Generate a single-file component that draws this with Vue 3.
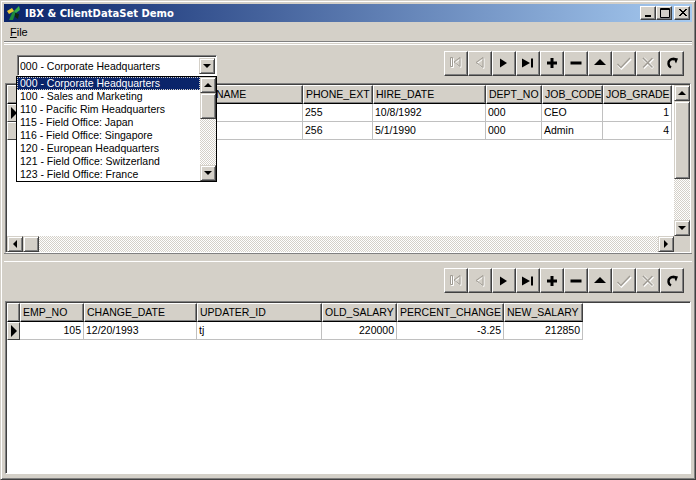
<template>
  <div class="window">
    <div class="titlebar">
      <svg class="app-icon" width="16" height="16" viewBox="0 0 16 16">
        <path d="M3 15 L7 6 L10 6 L7 15 Z" fill="#1d8a3a" />
        <path d="M1 6 L6 3 L8 6 L3 9 Z" fill="#e8c838" />
        <path d="M8 6 L13 1 L14 5 L10 8 Z" fill="#38b048" />
        <path d="M9 8 L13 9 L12 14 L9 12 Z" fill="#102810" />
      </svg>
      <span class="title-text">IBX &amp; ClientDataSet Demo</span>
      <div class="caption-buttons">
        <button class="caption-btn">
          <svg width="10" height="10" viewBox="0 0 10 10"><path d="M1 7h6v2H1z" fill="#000" /></svg>
        </button>
        <button class="caption-btn">
          <svg width="10" height="10" viewBox="0 0 10 10"><path d="M0.5 0.5h9v9h-9z M0.5 1.5h9" fill="none" stroke="#000" /></svg>
        </button>
        <button class="caption-btn close">
          <svg width="10" height="10" viewBox="0 0 10 10"><path d="M1 1l7 7M2 1l7 7M8 1L1 8M9 1L2 8" fill="none" stroke="#000" /></svg>
        </button>
      </div>
    </div>
    <div class="menubar"><span class="menu-item"><u>F</u>ile</span></div>

    <div class="pane pane-top">
      <div class="toolbar">
        <div class="combo">
          <span class="combo-text">{{ departments[0] }}</span>
          <div class="sb-btn combo-btn"><span class="arrow down"></span></div>
        </div>
        <div class="navigator">
          <button v-for="b in navButtons" :key="b.name" class="nav-btn">
            <svg width="18" height="18" viewBox="0 0 18 18" v-html="b.svg"></svg>
          </button>
        </div>
      </div>

      <div class="grid grid-top">
        <div class="grid-main">
          <div class="grid-table">
            <div class="grid-row head">
              <div class="cell indicator"></div>
              <div v-for="c in empCols" :key="c.key" class="cell" :class="{ 'half-covered': c.key === 'last' }" :style="{ width: c.w + 'px' }">{{ c.name }}</div>
            </div>
            <div v-for="(row, i) in empRows" :key="i" class="grid-row">
              <div class="cell indicator"><span v-if="i === 0" class="row-mark"></span></div>
              <div v-for="(c, j) in empCols" :key="c.key" class="cell" :class="{ right: c.right }" :style="{ width: c.w + 'px' }">{{ row[j] }}</div>
            </div>
          </div>
          <div class="vscroll">
            <div class="sb-btn"><span class="arrow up"></span></div>
            <div class="sb-thumb v-thumb"></div>
            <div class="sb-track"></div>
            <div class="sb-btn"><span class="arrow down"></span></div>
          </div>
        </div>
        <div class="hscroll">
          <div class="sb-btn"><span class="arrow left"></span></div>
          <div class="sb-thumb h-thumb"></div>
          <div class="sb-track"></div>
          <div class="sb-btn"><span class="arrow right"></span></div>
          <div class="sb-corner"></div>
        </div>
      </div>

      <div class="dropdown">
        <div class="drop-list">
          <div v-for="(d, i) in departments" :key="d" class="drop-item" :class="{ selected: i === 0 }">{{ d }}</div>
        </div>
        <div class="vscroll drop-scroll">
          <div class="sb-btn"><span class="arrow up"></span></div>
          <div class="sb-thumb drop-thumb"></div>
          <div class="sb-track"></div>
          <div class="sb-btn"><span class="arrow down"></span></div>
        </div>
      </div>
    </div>

    <div class="splitter"></div>

    <div class="pane pane-bottom">
      <div class="toolbar toolbar-bottom">
        <div class="navigator">
          <button v-for="b in navButtons" :key="b.name" class="nav-btn">
            <svg width="18" height="18" viewBox="0 0 18 18" v-html="b.svg"></svg>
          </button>
        </div>
      </div>
      <div class="grid grid-bottom">
        <div class="grid-table">
          <div class="grid-row head">
            <div class="cell indicator"></div>
            <div v-for="c in salaryCols" :key="c.name" class="cell" :style="{ width: c.w + 'px' }">{{ c.name }}</div>
          </div>
          <div v-for="(row, i) in salaryRows" :key="i" class="grid-row">
            <div class="cell indicator"><span class="row-mark"></span></div>
            <div v-for="(c, j) in salaryCols" :key="c.name" class="cell" :class="{ right: c.right }" :style="{ width: c.w + 'px' }">{{ row[j] }}</div>
          </div>
        </div>
      </div>
    </div>
  </div>
</template>

<script setup>
const departments = [
  '000 - Corporate Headquarters',
  '100 - Sales and Marketing',
  '110 - Pacific Rim Headquarters',
  '115 - Field Office: Japan',
  '116 - Field Office: Singapore',
  '120 - European Headquarters',
  '121 - Field Office: Switzerland',
  '123 - Field Office: France',
]

// the first columns sit under the open combo list, only the tail of the last name header shows
const empCols = [
  { key: 'emp', name: '', w: 64 },
  { key: 'first', name: '', w: 98 },
  { key: 'last', name: 'NAME', w: 121 },
  { key: 'phone', name: 'PHONE_EXT', w: 70 },
  { key: 'hire', name: 'HIRE_DATE', w: 113 },
  { key: 'dept', name: 'DEPT_NO', w: 56 },
  { key: 'job', name: 'JOB_CODE', w: 61 },
  { key: 'grade', name: 'JOB_GRADE', w: 69, right: true },
]
const empRows = [
  ['', '', '', '255', '10/8/1992', '000', 'CEO', '1'],
  ['', '', '', '256', '5/1/1990', '000', 'Admin', '4'],
]

const salaryCols = [
  { name: 'EMP_NO', w: 64, right: true },
  { name: 'CHANGE_DATE', w: 113 },
  { name: 'UPDATER_ID', w: 125 },
  { name: 'OLD_SALARY', w: 75, right: true },
  { name: 'PERCENT_CHANGE', w: 107, right: true },
  { name: 'NEW_SALARY', w: 79, right: true },
]
const salaryRows = [['105', '12/20/1993', 'tj', '220000', '-3.25', '212850']]

const navButtons = [
  { name: 'first', svg: '<path d="M4.500 4.500h2v9h-2z M8 9l6-4.500v9z" fill="none" stroke="#fff" /><path d="M3.500 3.500h2v9h-2z M7 8l6-4.500v9z" fill="none" stroke="#a09c94" />' },
  { name: 'prior', svg: '<path d="M6 9.500l7-5v10z" fill="none" stroke="#fff" /><path d="M5 8.500l7-5v10z" fill="none" stroke="#a09c94" />' },
  { name: 'next', svg: '<path d="M5 4.500l7 4.500-7 4.500z" fill="#000" />' },
  { name: 'last', svg: '<path d="M3 4.500l8 4.500-8 4.500z M12 4.500h2v9h-2z" fill="#000" />' },
  { name: 'insert', svg: '<path d="M7.500 4h3v3.500H14v3h-3.500V14h-3v-3.500H4v-3h3.500z" fill="#000" />' },
  { name: 'delete', svg: '<path d="M3.500 7.500h11v3h-11z" fill="#000" />' },
  { name: 'edit', svg: '<path d="M9 5l6 6H3z" fill="#000" />' },
  { name: 'post', svg: '<path d="M3 11l3.500 3.500L16 5" fill="none" stroke="#fff" stroke-width="2.200" /><path d="M2.500 10l3.500 3.500L15 4" fill="none" stroke="#a09c94" stroke-width="1.400" />' },
  { name: 'cancel', svg: '<path d="M4.500 4.500l9.500 9.500M14 4.500l-9.500 9.500" fill="none" stroke="#fff" stroke-width="2.800" /><path d="M4 4l9.500 9.500M13.500 4L4 13.500" fill="none" stroke="#a09c94" stroke-width="1.600" />' },
  { name: 'refresh', svg: '<path d="M11.500 5.500A4.200 4.200 0 0 0 5.500 9.500c0 1.800 1 3.200 2.500 4" fill="none" stroke="#000" stroke-width="2.400" /><path d="M10 3.500l5 1-2 5z" fill="#000" />' },
]
</script>

<style>
html,
body {
  margin: 0;
  background: #d4d0c8;
}
</style>

<style scoped>
.window {
  width: 696px;
  height: 480px;
  box-sizing: border-box;
  padding: 3px;
  background: #d4d0c8;
  border: 1px solid;
  border-color: #d4d0c8 #404040 #404040 #d4d0c8;
  box-shadow: inset 1px 1px #fff, inset -1px -1px #808080;
  display: flex;
  flex-direction: column;
  font-family: "Liberation Sans", Arial, sans-serif;
  font-size: 10.5px;
  color: #000;
  overflow: hidden;
}

.titlebar {
  height: 18px;
  flex: none;
  display: flex;
  align-items: center;
  padding: 0 2px;
  background: linear-gradient(to right, #0a246a, #a6caf0);
}
.app-icon {
  flex: none;
  margin-right: 3px;
}
.title-text {
  color: #fff;
  font-family: "DejaVu Sans", sans-serif;
  font-weight: bold;
  font-size: 10px;
  flex: 1;
}
.caption-buttons {
  display: flex;
}
.caption-btn {
  width: 16px;
  height: 14px;
  padding: 0 0 0 1px;
  background: #d4d0c8;
  border: 1px solid;
  border-color: #fff #404040 #404040 #fff;
  box-shadow: inset -1px -1px #808080;
  display: flex;
  align-items: center;
  justify-content: center;
}
.caption-btn.close {
  margin-left: 2px;
}

.menubar {
  height: 19px;
  flex: none;
  display: flex;
  align-items: center;
  font-size: 11px;
  border-bottom: 1px solid #808080;
  box-shadow: 0 1px #fff;
}
.menu-item {
  padding: 0 6px;
}

.pane {
  display: flex;
  flex-direction: column;
  position: relative;
}
.pane-top {
  height: 210px;
  flex: none;
  margin-top: 1px;
}
.pane-bottom {
  flex: 1;
  min-height: 0;
  border-top: 1px solid #fff;
}

.splitter {
  height: 8px;
  flex: none;
  box-sizing: border-box;
  border-top: 1px solid #808080;
}

.toolbar {
  height: 39px;
  flex: none;
  display: flex;
  align-items: center;
  justify-content: space-between;
  box-sizing: border-box;
  padding: 0 8px 2px 13px;
  margin-top: 1px;
  border-top: 1px solid #fff;
}
.toolbar-bottom {
  justify-content: flex-end;
  margin-top: 0;
  border-top: 0;
}

.combo {
  width: 200px;
  height: 21px;
  box-sizing: border-box;
  display: flex;
  align-items: center;
  background: #fff;
  border: 1px solid;
  border-color: #808080 #fff #fff #808080;
  box-shadow: inset 1px 1px #404040;
  padding: 1px 1px 1px 2px;
  margin-top: 5px;
}
.combo-text {
  flex: 1;
}
.combo-btn {
  height: 17px;
}

.navigator {
  display: flex;
}
.nav-btn {
  width: 24px;
  height: 25px;
  padding: 0;
  background: #d4d0c8;
  border: 1px solid;
  border-color: #fff #404040 #404040 #fff;
  box-shadow: inset -1px -1px #808080;
  display: flex;
  align-items: center;
  justify-content: center;
}

.grid {
  background: #fff;
  box-sizing: border-box;
  border: 1px solid;
  border-color: #808080 #fff #fff #808080;
  box-shadow: inset 1px 1px #404040;
  padding: 1px 0 0 1px;
  margin: 0 1px;
  display: flex;
  flex-direction: column;
  min-height: 0;
  flex: 1;
}
.grid-bottom {
  margin-bottom: 2px;
}
.grid-main {
  flex: 1;
  display: flex;
  min-height: 0;
}
.grid-table {
  flex: 1;
  min-width: 0;
  overflow: hidden;
}
.grid-row {
  display: flex;
  height: 18px;
}
.cell {
  flex: none;
  box-sizing: border-box;
  height: 18px;
  line-height: 17px;
  padding: 0 2px;
  white-space: nowrap;
  overflow: hidden;
  border-right: 1px solid #c0c0c0;
  border-bottom: 1px solid #c0c0c0;
}
.cell.right {
  text-align: right;
}
.indicator {
  width: 13px;
  padding: 0;
  background: #d4d0c8;
  border-style: solid;
  border-width: 1px;
  border-color: #fff #404040 #404040 #fff;
  display: flex;
  align-items: center;
  justify-content: center;
}
.head .cell {
  height: 19px;
  background: #d4d0c8;
  border-top: 1px solid #fff;
  border-left: 1px solid #fff;
  border-right: 1px solid #404040;
  border-bottom: 1px solid #000;
  box-shadow: inset -1px -1px #808080;
  line-height: 16px;
  padding: 0 1px 0 2px;
}
.head .cell.half-covered {
  padding-left: 33px;
}
.head {
  height: 19px;
}
.row-mark {
  width: 0;
  height: 0;
  border-style: solid;
  border-width: 6px 0 6px 6px;
  border-color: transparent transparent transparent #000;
}

.vscroll {
  width: 16px;
  flex: none;
  display: flex;
  flex-direction: column;
}
.hscroll {
  height: 16px;
  flex: none;
  display: flex;
}
.sb-btn {
  width: 16px;
  height: 16px;
  flex: none;
  box-sizing: border-box;
  background: #d4d0c8;
  border: 1px solid;
  border-color: #d4d0c8 #404040 #404040 #d4d0c8;
  box-shadow: inset 1px 1px #fff, inset -1px -1px #808080;
  display: flex;
  align-items: center;
  justify-content: center;
}
.sb-track {
  flex: 1;
  background: repeating-conic-gradient(#d4d0c8 0 25%, #fff 0 50%) 0 0 / 2px 2px;
}
.sb-thumb {
  box-sizing: border-box;
  flex: none;
  background: #d4d0c8;
  border: 1px solid;
  border-color: #d4d0c8 #404040 #404040 #d4d0c8;
  box-shadow: inset 1px 1px #fff, inset -1px -1px #808080;
}
.v-thumb {
  height: 78px;
}
.h-thumb {
  width: 16px;
}
.sb-corner {
  width: 16px;
  flex: none;
  background: #d4d0c8;
}
.arrow {
  width: 0;
  height: 0;
  border-style: solid;
  border-color: transparent;
}
.arrow.up {
  border-width: 0 4px 4px;
  border-bottom-color: #000;
}
.arrow.down {
  border-width: 4px 4px 0;
  border-top-color: #000;
}
.arrow.left {
  border-width: 4px 4px 4px 0;
  border-right-color: #000;
}
.arrow.right {
  border-width: 4px 0 4px 4px;
  border-left-color: #000;
}

/* opened list of the combo, lies over the grid */
.dropdown {
  position: absolute;
  left: 12px;
  top: 33px;
  width: 201px;
  height: 106px;
  box-sizing: border-box;
  display: flex;
  background: #fff;
  border: 1px solid #000;
  z-index: 2;
}
.drop-list {
  flex: 1;
}
.drop-item {
  height: 13px;
  line-height: 13px;
  padding-left: 3px;
  white-space: nowrap;
}
.drop-item.selected {
  background: #0a246a;
  color: #fff;
  outline: 1px dotted #d4d0c8;
  outline-offset: -1px;
}
.drop-scroll {
  height: 104px;
}
.drop-thumb {
  height: 26px;
}
</style>
